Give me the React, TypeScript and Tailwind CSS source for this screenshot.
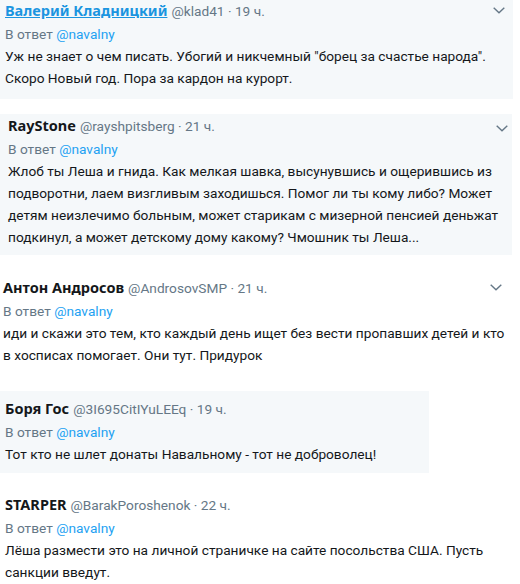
type Tweet = {
    name: string;
    handle: string;
    time: string;
    body: string[];
    box: string;
    head: string;
    nameClass?: string;
    chevron?: string;
};

const tweets: Tweet[] = [
    {
        name: "Валерий Кладницкий",
        handle: "@klad41",
        time: "19 ч.",
        body: [
            "Уж не знает о чем писать. Убогий и никчемный \"борец за счастье народа\".",
            "Скоро Новый год. Пора за кардон на курорт.",
        ],
        box: "w-[513px] bg-[#f5f8fa] pl-[5px] pb-[10px]",
        head: "pt-0",
        nameClass: "text-[#1b95e0] underline",
        chevron: "right-[8px] top-[7px]",
    },
    {
        name: "RayStone",
        handle: "@rayshpitsberg",
        time: "21 ч.",
        body: [
            "Жлоб ты Леша и гнида. Как мелкая шавка, высунувшись и ощерившись из",
            "подворотни, лаем визгливым заходишься. Помог ли ты кому либо? Может",
            "детям неизлечимо больным, может старикам с мизерной пенсией деньжат",
            "подкинул, а может детскому дому какому? Чмошник ты Леша...",
        ],
        box: "mt-[15px] w-[512px] bg-[#f5f8fa] pl-[8px] pb-[7px]",
        head: "pt-[1px]",
        chevron: "right-[4px] top-[11px]",
    },
    {
        name: "Антон Андросов",
        handle: "@AndrosovSMP",
        time: "21 ч.",
        body: [
            "иди и скажи это тем, кто каждый день ищет без вести пропавших детей и кто",
            "в хосписах помогает. Они тут. Придурок",
        ],
        box: "w-[520px] pl-[3px] pb-[25px]",
        head: "pt-[22px]",
        chevron: "right-[18px] top-[29px]",
    },
    {
        name: "Боря Гос",
        handle: "@3I695CitIYuLEEq",
        time: "19 ч.",
        body: ["Тот кто не шлет донаты Навальному - тот не доброволец!"],
        box: "w-[429px] bg-[#f5f8fa] pl-[5px] pb-[8px]",
        head: "pt-[7px]",
    },
    {
        name: "STARPER",
        handle: "@BarakPoroshenok",
        time: "22 ч.",
        body: [
            "Лёша размести это на личной страничке на сайте посольства США. Пусть",
            "санкции введут.",
        ],
        box: "w-[520px] pl-[5px] pb-[4px]",
        head: "pt-[21px]",
    },
];

function Caret({ className }: { className: string }) {
    return (
        <svg
            className={"absolute h-[7px] w-[12px] text-[#657786] " + className}
            viewBox="0 0 12 7"
            fill="none"
        >
            <path d="M0.7 0.8 L6 5.8 L11.3 0.8" stroke="currentColor" strokeWidth="1.4" />
        </svg>
    );
}

function Reply({ t }: { t: Tweet }) {
    return (
        <div className={"relative " + t.box}>
            <div className={"flex items-baseline leading-[20px] " + t.head}>
                <span
                    className={"text-[14.5px] font-bold " + (t.nameClass ?? "text-[#14171a]")}
                    style={{ fontFamily: '"Noto Sans", sans-serif' }}
                >
                    {t.name}
                </span>
                <span className="ml-[4px] text-[13.7px] text-[#657786]">
                    {t.handle} · {t.time}
                </span>
            </div>
            <div className="mt-[2px] text-[13.7px] leading-[22px] text-[#657786]">
                В ответ <span className="text-[#1da1f2]">@navalny</span>
            </div>
            <div className="text-[13.7px] leading-[22px] text-[#14171a]">
                {t.body.map((line, i) => (
                    <div key={i} className="whitespace-nowrap">{line}</div>
                ))}
            </div>
            {t.chevron && <Caret className={t.chevron} />}
        </div>
    );
}

export default function App() {
    return (
        <div
            className="h-[584px] w-[520px] overflow-hidden bg-white"
            style={{ fontFamily: "Roboto, \"Noto Sans\", sans-serif" }}
        >
            {tweets.map((t, i) => (
                <Reply key={i} t={t} />
            ))}
        </div>
    );
}
